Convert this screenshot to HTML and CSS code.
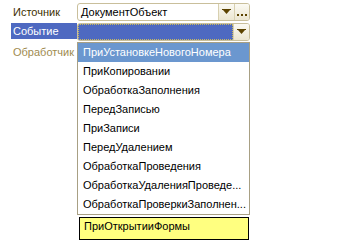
FILE: index.html
```html
<!DOCTYPE html>
<html lang="ru">
<head>
    <meta charset="UTF-8">
    <title>Событие</title>
    <link rel="stylesheet" href="styles.css">
</head>
<body>
    <div class="form">
        <div class="row">
            <span class="label">Источник</span>
            <div class="field">
                <span class="value">ДокументОбъект</span>
                <span class="btn"><svg width="9" height="6" viewBox="0 0 9 6"><rect x="0" y="0" width="9" height="1" fill="#5c4300"/><path d="M1 1 H8 L4.5 5 Z" fill="#5c4300"/></svg></span>
                <span class="btn dots"><svg width="10" height="2" viewBox="0 0 10 2"><rect x="0" y="0" width="2" height="2" fill="#5c4300"/><rect x="4" y="0" width="2" height="2" fill="#5c4300"/><rect x="8" y="0" width="2" height="2" fill="#5c4300"/></svg></span>
            </div>
        </div>
        <div class="row">
            <span class="label selected">Событие</span>
            <div class="field active">
                <span class="value"></span>
                <span class="btn"><svg width="9" height="6" viewBox="0 0 9 6"><rect x="0" y="0" width="9" height="1" fill="#5c4300"/><path d="M1 1 H8 L4.5 5 Z" fill="#5c4300"/></svg></span>
            </div>
        </div>
        <div class="row">
            <span class="label dim">Обработчик</span>
        </div>
    </div>

    <ul class="dropdown">
        <li class="current">ПриУстановкеНовогоНомера</li>
        <li>ПриКопировании</li>
        <li>ОбработкаЗаполнения</li>
        <li>ПередЗаписью</li>
        <li>ПриЗаписи</li>
        <li>ПередУдалением</li>
        <li>ОбработкаПроведения</li>
        <li>ОбработкаУдаленияПроведе...</li>
        <li>ОбработкаПроверкиЗаполнен...</li>
    </ul>

    <div class="tooltip">ПриОткрытииФормы</div>
</body>
</html>
```

FILE: styles.css
```css
body {
    margin: 0;
    background: #fff;
    font-family: "Liberation Sans", Arial, sans-serif;
    font-size: 11px;
    color: #000;
}
.form {
    padding: 3px 0 0 11px;
    display: flex;
    flex-direction: column;
    gap: 2px;
}
.row {
    display: flex;
    align-items: stretch;
    height: 18px;
}
.label {
    width: 64px;
    padding-left: 2px;
    display: flex;
    align-items: center;
    color: #3d3000;
}
.label.selected {
    background: #4e69c1;
    color: #fff;
    height: 16px;
}
.label.dim {
    color: #a08b4f;
}
.field {
    width: 173px;
    display: flex;
    border: 1px solid #c9bf9b;
    border-radius: 3px;
    box-sizing: border-box;
    background: #fff;
    overflow: hidden;
}
.field .value {
    flex: 1;
    display: flex;
    align-items: center;
    padding-left: 3px;
}
.field.active .value {
    background: #4e69c1;
    outline: 1px dotted #c8b860;
    outline-offset: -1px;
}
.btn {
    width: 15px;
    display: flex;
    align-items: center;
    justify-content: center;
    background: linear-gradient(#fbfaf3, #ebe6d1);
    border-left: 1px solid #d8d0b0;
}
.btn.dots {
    align-items: flex-end;
    padding-bottom: 4px;
    box-sizing: border-box;
}
.dropdown {
    position: absolute;
    left: 77px;
    top: 42px;
    width: 171px;
    margin: 0;
    padding: 0;
    list-style: none;
    background: #fff;
    border: 1px solid #a8a084;
}
.dropdown li {
    height: 19px;
    line-height: 19px;
    padding-left: 5px;
    white-space: nowrap;
}
.dropdown li.current {
    background: #6b97cf;
    color: #fff;
}
.tooltip {
    position: absolute;
    left: 79px;
    top: 217px;
    width: 164px;
    height: 21px;
    background: #ffff80;
    border: 1px solid #000;
    padding-left: 4px;
    line-height: 16px;
}
```
